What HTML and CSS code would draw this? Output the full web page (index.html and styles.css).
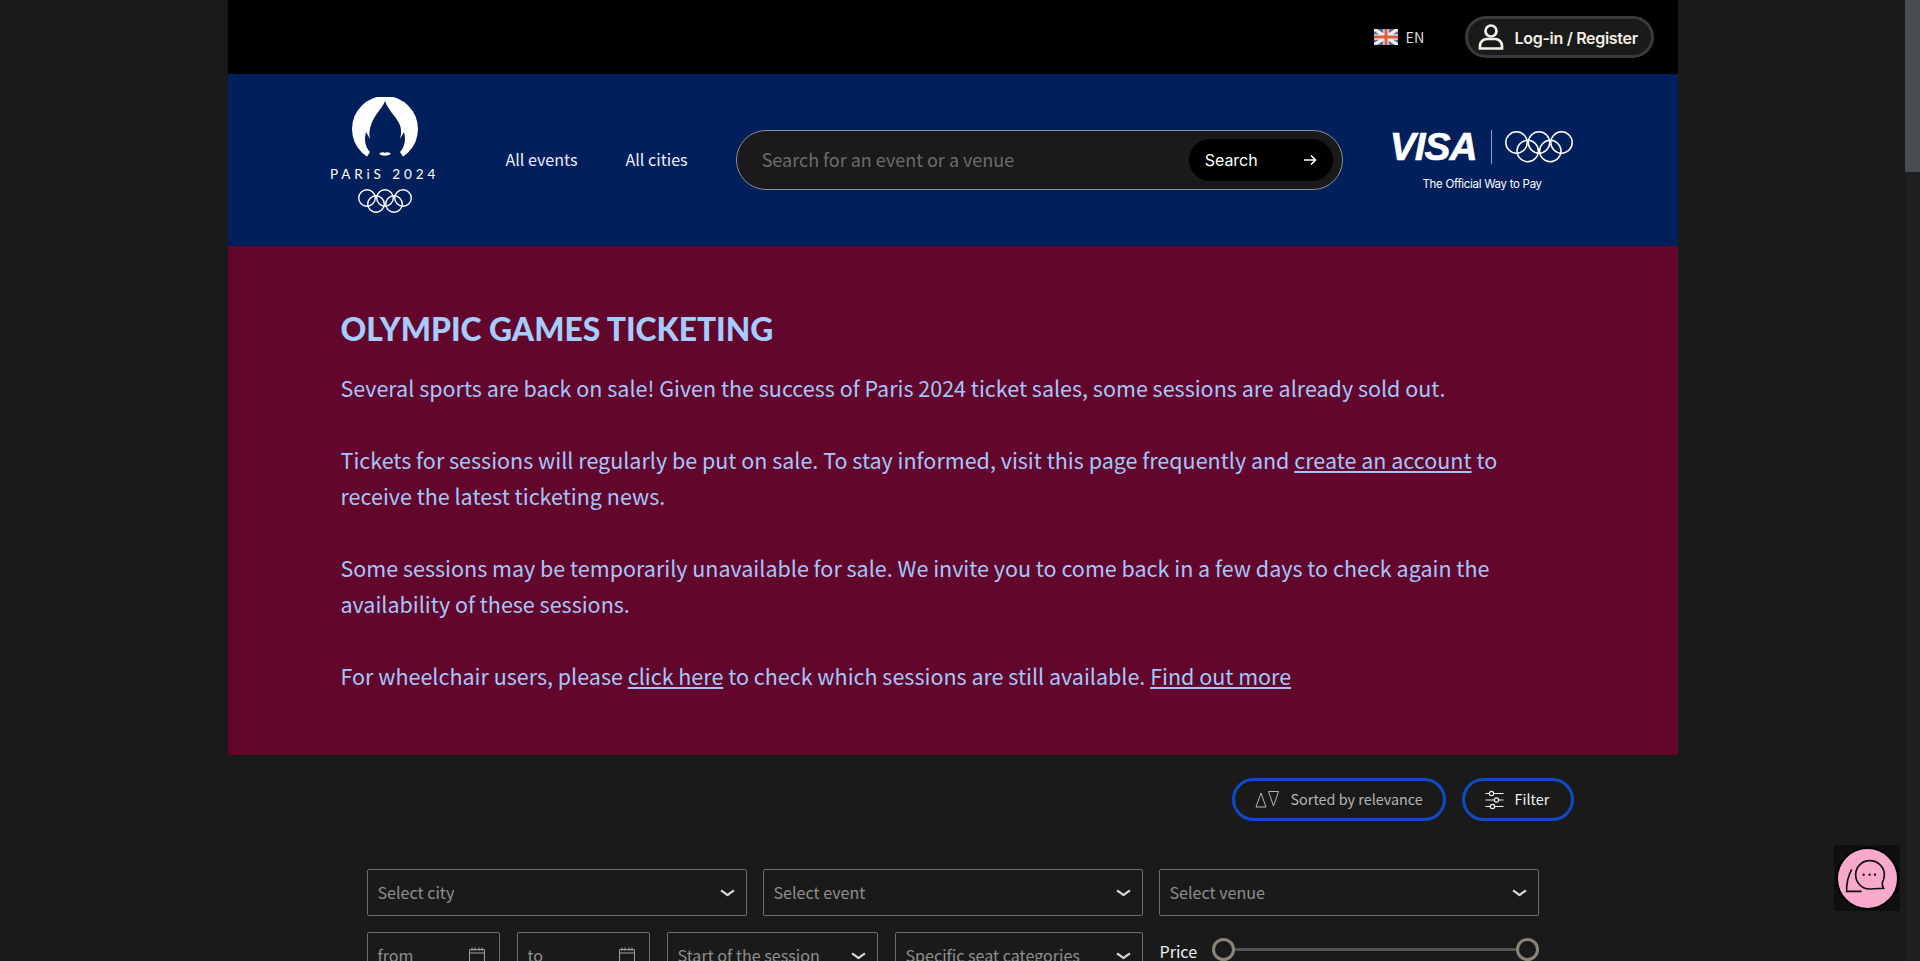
FILE: index.html
```html
<!DOCTYPE html>
<html>
<head>
	<title>Olympic Games Ticketing</title>
	<link rel="stylesheet" href="styles.css">
</head>
<body>
<div class="page">
	<div class="wrapper">

		<!--========== TOP BAR =============-->
		<div class="top__bar">
			<div class="lang">
				<svg class="flag" width="24" height="16" viewBox="0 0 24 16">
					<rect width="24" height="16" fill="#56689c"/>
					<path d="M0 0L24 16M24 0L0 16" stroke="#eee" stroke-width="3.400"/>
					<path d="M12 0V16M0 8H24" stroke="#f4e6e0" stroke-width="5.500"/>
					<path d="M12 0V16M0 8H24" stroke="#d6603f" stroke-width="3"/>
				</svg>
				<span class="lang__name">EN</span>
			</div>
			<div class="login__btn">
				<svg width="26" height="26" viewBox="0 0 26 26" fill="none" stroke="#f4efe6" stroke-width="2.700">
					<circle cx="13" cy="7" r="5.500"/>
					<path d="M2 24.500v-2.500c0-4 3-7 7-7h8c4 0 7 3 7 7v2.500z"/>
				</svg>
				<span class="login__text">Log-in / Register</span>
			</div>
		</div>

		<!--========== MAIN HEADER =============-->
		<div class="main__header">
			<div class="paris__logo">
				<svg width="66" height="62" viewBox="0 0 66 62">
					<circle cx="33" cy="32" r="33" fill="#fff"/>
					<path d="M33 4C30 12 22 18 19 28C17 34 17 38 18 42L14 35C12 42 13 50 18 55C16 58 15 60 13 62H53C51 60 50 58 48 55C53 50 54 42 52 35L48 42C50 36 49 30 47 26C43 18 36 13 33 4Z" fill="#001f5b"/>
					<path d="M27 56.500C30 55 32 55 33 56C34 55 36 55 39 56.500C36 59.500 30 59.500 27 56.500Z" fill="#fff"/>
				</svg>
				<p class="paris__word">PARiS 2024</p>
				<svg class="rings" width="54" height="24" viewBox="0 0 54 24" fill="none" stroke="#fff" stroke-width="1.400">
					<circle cx="9" cy="9" r="8.300"/>
					<circle cx="27" cy="9" r="8.300"/>
					<circle cx="45" cy="9" r="8.300"/>
					<circle cx="18" cy="15" r="8.300"/>
					<circle cx="36" cy="15" r="8.300"/>
				</svg>
			</div>
			<a class="nav__link" href="#">All events</a>
			<a class="nav__link" href="#">All cities</a>
			<div class="search__box">
				<span class="search__hint">Search for an event or a venue</span>
				<div class="search__btn">
					<span>Search</span>
					<svg width="14" height="12" viewBox="0 0 14 12" fill="none" stroke="#fff" stroke-width="1.600">
						<path d="M1 6H12.500M8 1.500L12.500 6 8 10.500"/>
					</svg>
				</div>
			</div>
			<div class="visa__logo">
				<div class="visa__top">
					<span class="visa__word">VISA</span>
					<span class="visa__line"></span>
					<svg width="68" height="32" viewBox="0 0 68 32" fill="none" stroke="#fff" stroke-width="1.500">
						<circle cx="11.500" cy="11.500" r="10.700"/>
						<circle cx="34" cy="11.500" r="10.700"/>
						<circle cx="56.500" cy="11.500" r="10.700"/>
						<circle cx="22.700" cy="20" r="10.700"/>
						<circle cx="45.300" cy="20" r="10.700"/>
					</svg>
				</div>
				<p class="visa__tag">The Official Way to Pay</p>
			</div>
		</div>

		<!--========== TICKETING BANNER =============-->
		<div class="banner">
			<h1 class="banner__title">OLYMPIC GAMES TICKETING</h1>
			<p>Several sports are back on sale! Given the success of Paris 2024 ticket sales, some sessions are already sold out.</p>
			<p>Tickets for sessions will regularly be put on sale. To stay informed, visit this page frequently and <a href="#">create an account</a> to receive the latest ticketing news.</p>
			<p>Some sessions may be temporarily unavailable for sale. We invite you to come back in a few days to check again the availability of these sessions.</p>
			<p>For wheelchair users, please <a href="#">click here</a> to check which sessions are still available. <a href="#">Find out more</a></p>
		</div>

		<!--========== SORT & FILTER =============-->
		<div class="sort__row">
			<div class="pill pill__sort">
				<svg width="25" height="17" viewBox="0 0 25 17" fill="none" stroke="#b5b5b5" stroke-width="1">
					<path d="M6 2L11 16H1zM13.500 0.500H23.500L18.500 15z"/>
				</svg>
				<span class="pill__text">Sorted by relevance</span>
			</div>
			<div class="pill pill__filter">
				<svg width="19" height="20" viewBox="0 0 19 20" fill="none" stroke="#eee" stroke-width="1.200">
					<path d="M0.500 3.500H4M9 3.500H18.500M0.500 10H9M14 10H18.500M0.500 16.500H5M10 16.500H18.500"/>
					<circle cx="6.500" cy="3.500" r="2.200"/>
					<circle cx="11.500" cy="10" r="2.200"/>
					<circle cx="7.500" cy="16.500" r="2.200"/>
				</svg>
				<span class="pill__text">Filter</span>
			</div>
		</div>

		<!--========== FILTER FORM =============-->
		<div class="filter__form">
			<div class="filter__row">
				<div class="field field__wide"><span class="field__text">Select city</span><svg class="chev" width="15" height="8" viewBox="0 0 15 8"><path d="M1 1.500C4 3 6 5 7.500 6C9 5 11 3 14 1.500"/></svg></div>
				<div class="field field__wide"><span class="field__text">Select event</span><svg class="chev" width="15" height="8" viewBox="0 0 15 8"><path d="M1 1.500C4 3 6 5 7.500 6C9 5 11 3 14 1.500"/></svg></div>
				<div class="field field__wide"><span class="field__text">Select venue</span><svg class="chev" width="15" height="8" viewBox="0 0 15 8"><path d="M1 1.500C4 3 6 5 7.500 6C9 5 11 3 14 1.500"/></svg></div>
			</div>
			<div class="filter__row">
				<div class="row__left">
					<div class="field field__date"><span class="field__text">from</span><svg class="cal" width="18" height="20" viewBox="0 0 18 20"><path d="M1.500 3.500H16.500V19H1.500zM1.500 7H16.500M4 1.500V5M7 1.500V5M11 1.500V5M14 1.500V5"/></svg></div>
					<div class="field field__date"><span class="field__text">to</span><svg class="cal" width="18" height="20" viewBox="0 0 18 20"><path d="M1.500 3.500H16.500V19H1.500zM1.500 7H16.500M4 1.500V5M7 1.500V5M11 1.500V5M14 1.500V5"/></svg></div>
					<div class="field field__time"><span class="field__text">Start of the session</span><svg class="chev" width="15" height="8" viewBox="0 0 15 8"><path d="M1 1.500C4 3 6 5 7.500 6C9 5 11 3 14 1.500"/></svg></div>
					<div class="field field__seat"><span class="field__text">Specific seat categories</span><svg class="chev" width="15" height="8" viewBox="0 0 15 8"><path d="M1 1.500C4 3 6 5 7.500 6C9 5 11 3 14 1.500"/></svg></div>
				</div>
				<div class="price">
					<span class="price__label">Price</span>
					<div class="price__track">
						<span class="price__knob"></span>
						<span class="price__knob"></span>
					</div>
				</div>
			</div>
		</div>
	</div>

	<!--========== SCROLLBAR =============-->
	<div class="scroll__bar"><div class="scroll__thumb"></div></div>
</div>

<!--========== CHAT BUTTON =============-->
<div class="chat__box">
	<div class="chat__btn">
		<svg width="44" height="44" viewBox="46 46 132 132" fill="none" stroke="#111" stroke-width="5">
			<path d="M66 86C56 105 50 125 51 152L96 152"/>
			<path d="M120 60C96 60 78 79 78 102S96 145 120 145L162 143C157 135 157 130 158 125C162 118 164 110 164 102C164 79 145 60 120 60Z"/>
			<circle cx="102" cy="102" r="3.500" fill="#111" stroke="none"/>
			<circle cx="120" cy="102" r="3.500" fill="#111" stroke="none"/>
			<circle cx="136" cy="102" r="3.500" fill="#111" stroke="none"/>
		</svg>
	</div>
</div>
</body>
</html>
```
FILE: styles.css
```css
*{
	margin: 0;
	padding: 0;
	box-sizing: border-box;
}

a{
	color: inherit;
}

html, body{
	height: 961px;
	overflow: hidden;
}

body{
	background-color: #1a1a1b;
	font-family: "Noto Sans CJK JP", "Noto Sans", sans-serif;
	color: #fff;
}

.page{
	display: flex;
	height: 961px;
	overflow: hidden;
}

.wrapper{
	width: 1450px;
	margin: 0 auto;
	flex-shrink: 0;
}

/*========= TOP BAR ================*/
.top__bar{
	height: 74px;
	background-color: #000;
	display: flex;
	justify-content: flex-end;
	align-items: center;
	padding-right: 24px;
}

.lang{
	display: flex;
	align-items: center;
	gap: 8px;
	font-size: 14.400px;
	color: #ddd;
	margin-right: 40px;
}

.lang__name{
	padding-bottom: 2px;
}

.login__btn{
	display: flex;
	align-items: center;
	gap: 11px;
	height: 42px;
	width: 189px;
	padding-left: 10px;
	border: 3px solid #3a3a3a;
	border-radius: 21px;
	background-color: #1a1a1a;
	font-family: "Inter", sans-serif;
	font-size: 16px;
	font-weight: 600;
	letter-spacing: -0.3px;
	color: #f4efe6;
}

.login__text{
	padding-top: 2px;
}

/*========= MAIN HEADER ================*/
.main__header{
	height: 172px;
	background-color: #001f5b;
	display: flex;
	align-items: center;
}

.paris__logo{
	width: 106px;
	margin-left: 104px;
	margin-right: 68px;
	margin-bottom: 10px;
	display: flex;
	flex-direction: column;
	align-items: center;
}

.paris__word{
	font-family: "Lato", sans-serif;
	font-size: 13.500px;
	line-height: 14px;
	letter-spacing: 3.900px;
	white-space: nowrap;
	margin-top: 8px;
}

.rings{
	margin-top: 8px;
}

.nav__link{
	font-size: 16.100px;
	text-decoration: none;
	color: #eef;
	margin-right: 48px;
	padding-bottom: 2px;
}

.search__box{
	width: 607px;
	height: 60px;
	border: 1px solid #8a8f9a;
	border-radius: 30px;
	background-color: #1a1a1a;
	display: flex;
	align-items: center;
	justify-content: space-between;
	padding: 0 9px 0 25px;
}

.search__hint{
	font-size: 18px;
	color: #6c6c6c;
	padding-bottom: 2px;
}

.search__btn{
	width: 144px;
	height: 42px;
	border-radius: 21px;
	background-color: #000;
	display: flex;
	align-items: center;
	justify-content: space-between;
	padding: 0 16px;
	font-family: "Inter", sans-serif;
	font-size: 16px;
}

.visa__logo{
	margin-left: 49px;
	width: 181px;
	display: flex;
	flex-direction: column;
	align-items: center;
}

.visa__top{
	display: flex;
	align-items: center;
	width: 100%;
}

.visa__word{
	width: 87px;
	margin-left: -2px;
	font-family: "Liberation Sans", sans-serif;
	font-weight: 700;
	font-style: italic;
	font-size: 39px;
	line-height: 34px;
	letter-spacing: -1px;
	-webkit-text-stroke: 0.6px #fff;
	white-space: nowrap;
}

.visa__line{
	width: 1px;
	height: 34px;
	background-color: #8fa0c0;
	margin: 0 13px 0 14px;
}

.visa__tag{
	font-family: "Inter", sans-serif;
	font-size: 11.500px;
	letter-spacing: -0.3px;
	margin-top: 13px;
}

/*========= BANNER ================*/
.banner{
	height: 509px;
	background-color: #63062b;
	padding: 63px 120px 0 113px;
	color: #a3c6ff;
	font-size: 21.500px;
	line-height: 36px;
}

.banner p{
	margin-bottom: 36px;
}

.banner__title{
	font-family: "Lato", sans-serif;
	font-size: 31.800px;
	font-weight: 900;
	line-height: 40px;
	color: #a6ccff;
	margin-bottom: 21px;
}

/*========= SORT ROW ================*/
.sort__row{
	display: flex;
	justify-content: flex-end;
	gap: 16px;
	padding: 23px 104px 0 0;
}

.pill{
	height: 43px;
	border: 3px solid #0f4bc4;
	border-radius: 22px;
	display: flex;
	align-items: center;
	font-size: 14.400px;
}

.pill__text{
	padding-bottom: 3px;
}

.pill__sort{
	width: 214px;
	padding-left: 20px;
	gap: 11px;
	color: #b5b5b5;
}

.pill__filter{
	width: 112px;
	padding-left: 20px;
	gap: 11px;
	color: #f2f2f2;
}

/*========= FILTER FORM ================*/
.filter__form{
	padding: 48px 139px 0 139px;
}

.filter__row{
	display: flex;
	justify-content: space-between;
	margin-bottom: 16px;
}

.field{
	height: 47px;
	border: 1px solid #6e6e6e;
	border-radius: 2px;
	display: flex;
	align-items: center;
	justify-content: space-between;
	padding: 0 11px 0 10px;
	font-size: 16.100px;
	color: #8f8f8f;
	flex-shrink: 0;
}

.field__text{
	padding-bottom: 2px;
}

.field__wide{
	width: 380px;
}

.row__left{
	display: flex;
	gap: 17px;
}

.field__date{
	width: 133px;
}

.field__time{
	width: 211px;
}

.field__seat{
	width: 248px;
}

.chev{
	fill: none;
	stroke: #d8d8d8;
	stroke-width: 2.200;
}

.cal{
	fill: none;
	stroke: #a0a0a0;
	stroke-width: 1;
	margin-right: 2px;
}

.price{
	width: 380px;
	height: 35px;
	padding-left: 1px;
	display: flex;
	align-items: center;
	gap: 15px;
}

.price__label{
	font-size: 16.100px;
	color: #eee;
	margin-top: 2px;
}

.price__track{
	flex: 1;
	height: 3px;
	background-color: #555;
	display: flex;
	justify-content: space-between;
	align-items: center;
}

.price__knob{
	width: 23px;
	height: 23px;
	border: 3px solid #8c8478;
	border-radius: 50%;
	background-color: #1a1a1b;
}

/*========= SCROLLBAR ================*/
.scroll__bar{
	width: 15px;
	flex-shrink: 0;
	background-color: #1e2021;
}

.scroll__thumb{
	height: 172px;
	background-color: #4b4e50;
}

/*========= CHAT ================*/
.chat__box{
	position: fixed;
	left: 1834px;
	top: 845px;
	width: 66px;
	height: 66px;
	background-color: #0f0f0f;
	display: flex;
	align-items: center;
	justify-content: center;
}

.chat__btn{
	width: 63px;
	height: 63px;
	border-radius: 50%;
	border: 2px solid #000;
	background-color: #f8a9cc;
	display: flex;
	align-items: center;
	justify-content: center;
}
```
